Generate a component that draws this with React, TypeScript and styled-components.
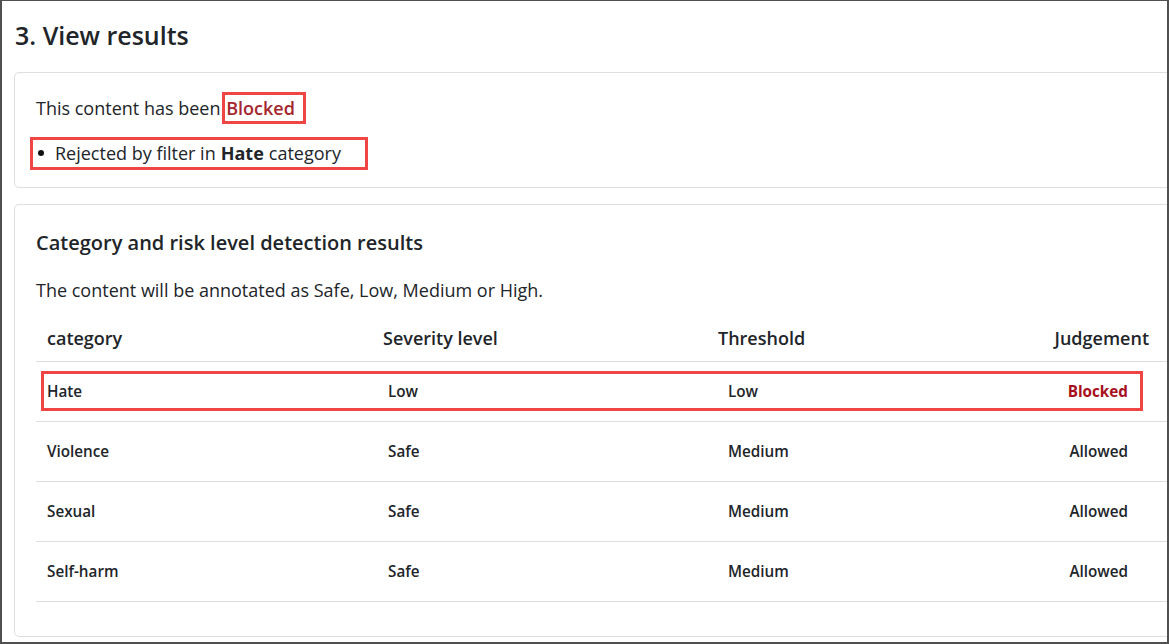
import React from "react";
import styled, { createGlobalStyle } from "styled-components";

const GlobalStyle = createGlobalStyle`
  html, body { margin: 0; padding: 0; background: #ffffff; }
  body { font-family: "Open Sans", "Noto Sans", sans-serif; color: #212529; }
  * { box-sizing: border-box; }
`;

const Frame = styled.div`
  width: 1169px;
  height: 644px;
  border-style: solid;
  border-color: #505050;
  border-width: 1px 2px 2px 2px;
  overflow: hidden;
  padding: 17px 0 0 12px;
  background: #fff;
`;

const Title = styled.h3`
  margin: 0 0 20px 1px;
  font-size: 25px;
  line-height: 34px;
  font-weight: 600;
  color: #212529;
`;

const Card = styled.section`
  width: 1220px;
  border: 1px solid #dedede;
  border-radius: 5px;
  background: #fff;
  margin-bottom: 16px;
`;

const StatusBody = styled.div`
  padding: 22px 21px 20px 21px;
`;

const StatusLine = styled.p`
  margin: 0 0 17px 0;
  font-size: 18px;
  line-height: 27px;
`;

const Highlight = styled.span`
  outline: 3px solid #f04545;
  outline-offset: 0;
  padding: 1px 8px 1px 1px;
`;

const BlockedWord = styled.span`
  color: #a4262c;
  font-weight: 600;
`;

const BulletList = styled.ul`
  list-style: none;
  margin: 0;
  padding: 0;
`;

const BulletItem = styled.li`
  display: inline-flex;
  align-items: center;
  font-size: 18px;
  line-height: 27px;
  outline: 3px solid #f04545;
  outline-offset: 0;
  padding: 0 24px 0 2px;
  margin-left: -3px;
  &::before {
    content: "";
    width: 6px;
    height: 6px;
    border-radius: 50%;
    background: #111;
    margin: 0 11px 0 3px;
  }
  b { font-weight: 700; margin: 0 5px; }
`;

const ResultsBody = styled.div`
  padding: 26px 21px 34px 21px;
`;

const SectionTitle = styled.h4`
  margin: 0 0 22px 0;
  font-size: 20px;
  line-height: 24px;
  font-weight: 600;
`;

const Description = styled.p`
  margin: 0 0 12px 0;
  font-size: 18px;
  line-height: 27px;
`;

const Table = styled.div`
  display: flex;
  flex-direction: column;
`;

const HeaderRow = styled.div`
  height: 46px;
  border-bottom: 1px solid #dedede;
  display: flex;
  align-items: center;
`;

const HeaderGrid = styled.div`
  width: 1113px;
  padding-left: 11px;
  display: grid;
  grid-template-columns: 336px 335px 1fr auto;
  font-size: 18px;
  font-weight: 600;
  line-height: 24px;
`;

const BodyRow = styled.div`
  height: 60px;
  border-bottom: 1px solid #dedede;
  display: flex;
  align-items: center;
`;

const BodyGrid = styled.div<{ $marked?: boolean }>`
  width: 1096px;
  margin: 0 0 1px 8px;
  height: 34px;
  padding: 0 12px 0 3px;
  display: grid;
  grid-template-columns: 341px 340px 1fr auto;
  align-items: center;
  font-size: 15.25px;
  font-weight: 600;
  outline: ${(p) => (p.$marked ? "3px solid #f04545" : "none")};
`;

const Cell = styled.span<{ $danger?: boolean }>`
  color: ${(p) => (p.$danger ? "#a80f1c" : "#212529")};
  font-weight: ${(p) => (p.$danger ? 700 : 600)};
`;

const rows = [
  { cat: "Hate", sev: "Low", thr: "Low", judge: "Blocked", marked: true },
  { cat: "Violence", sev: "Safe", thr: "Medium", judge: "Allowed" },
  { cat: "Sexual", sev: "Safe", thr: "Medium", judge: "Allowed" },
  { cat: "Self-harm", sev: "Safe", thr: "Medium", judge: "Allowed" },
];

export default function App() {
  return (
    <>
      <GlobalStyle />
      <Frame>
        <Title>3. View results</Title>
        <Card>
          <StatusBody>
            <StatusLine>
              This content has been{" "}
              <Highlight>
                <BlockedWord>Blocked</BlockedWord>
              </Highlight>
            </StatusLine>
            <BulletList>
              <BulletItem>
                Rejected by filter in<b>Hate</b>category
              </BulletItem>
            </BulletList>
          </StatusBody>
        </Card>
        <Card>
          <ResultsBody>
            <SectionTitle>Category and risk level detection results</SectionTitle>
            <Description>
              The content will be annotated as Safe, Low, Medium or High.
            </Description>
            <Table>
              <HeaderRow>
                <HeaderGrid>
                  <span>category</span>
                  <span>Severity level</span>
                  <span>Threshold</span>
                  <span>Judgement</span>
                </HeaderGrid>
              </HeaderRow>
              {rows.map((r) => (
                <BodyRow key={r.cat}>
                  <BodyGrid $marked={r.marked}>
                    <Cell>{r.cat}</Cell>
                    <Cell>{r.sev}</Cell>
                    <Cell>{r.thr}</Cell>
                    <Cell $danger={r.judge === "Blocked"}>{r.judge}</Cell>
                  </BodyGrid>
                </BodyRow>
              ))}
            </Table>
          </ResultsBody>
        </Card>
      </Frame>
    </>
  );
}
